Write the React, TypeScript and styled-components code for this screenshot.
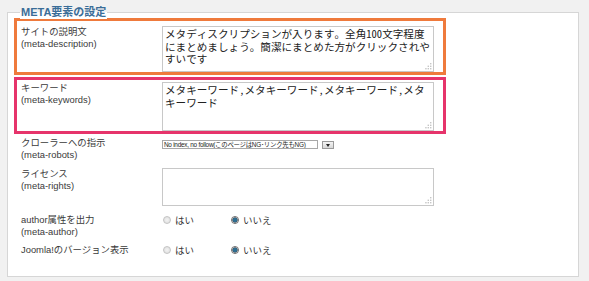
import React from 'react';
import styled, { createGlobalStyle } from 'styled-components';

const GlobalStyle = createGlobalStyle`
  body {
    margin: 0;
    background: #f1f1f1;
    font-family: 'Liberation Sans', 'Noto Sans CJK JP', sans-serif;
  }
`;

type RowData = {
  label: string;
  sub?: string;
  frame?: string;
  pt: number;
  mt?: number;
  field: React.ReactNode;
};

const Grip = () => (
  <GripIcon width="7" height="7" viewBox="0 0 7 7">
    <rect x="5" y="0" width="1.4" height="1.4" fill="#c6c6c6" />
    <rect x="2.6" y="2.6" width="1.4" height="1.4" fill="#c6c6c6" />
    <rect x="5" y="2.6" width="1.4" height="1.4" fill="#c6c6c6" />
    <rect x="0.2" y="5" width="1.4" height="1.4" fill="#c6c6c6" />
    <rect x="2.6" y="5" width="1.4" height="1.4" fill="#c6c6c6" />
    <rect x="5" y="5" width="1.4" height="1.4" fill="#c6c6c6" />
  </GripIcon>
);

const TextBox: React.FC<{ h: number; value?: string }> = ({ h, value }) => (
  <TextWrap>
    <TextArea style={{ height: h }} defaultValue={value} readOnly />
    <Grip />
  </TextWrap>
);

const YesNo = () => (
  <Radios>
    <Option>
      <Radio />
      はい
    </Option>
    <Option>
      <Radio checked />
      いいえ
    </Option>
  </Radios>
);

// built lazily so the styled parts below are defined by then
const getRows = (): RowData[] => [
  {
    label: 'サイトの説明文',
    sub: '(meta-description)',
    frame: '#ef7a3c',
    pt: 5,
    field: (
      <TextBox
        h={46}
        value="メタディスクリプションが入ります。全角100文字程度にまとめましょう。簡潔にまとめた方がクリックされやすいです"
      />
    ),
  },
  {
    label: 'キーワード',
    sub: '(meta-keywords)',
    frame: '#e6346b',
    pt: 2,
    mt: 2,
    field: <TextBox h={49} value="メタキーワード,メタキーワード,メタキーワード,メタキーワード" />,
  },
  {
    label: 'クローラーへの指示',
    sub: '(meta-robots)',
    pt: 0,
    field: (
      <SelectRow>
        <SelectBox>No index, no follow(このページはNG･リンク先もNG)</SelectBox>
        <DropButton />
      </SelectRow>
    ),
  },
  {
    label: 'ライセンス',
    sub: '(meta-rights)',
    pt: 1,
    field: <TextBox h={38} />,
  },
  {
    label: 'author属性を出力',
    sub: '(meta-author)',
    pt: 2,
    field: <YesNo />,
  },
  {
    label: 'Joomla!のバージョン表示',
    pt: 0,
    field: <YesNo />,
  },
];

const App = () => (
  <>
    <GlobalStyle />
    <Page>
      <Panel>
        <Legend>META要素の設定</Legend>
        {getRows().map((r) => (
          <Row key={r.label} frame={r.frame} pt={r.pt} mt={r.mt ?? 0}>
            <Label>
              {r.label}
              {r.sub && <br />}
              {r.sub}
            </Label>
            {r.field}
          </Row>
        ))}
      </Panel>
    </Page>
  </>
);

const Page = styled.div`
  padding: 12px 0 0 7px;
`;

const Panel = styled.div`
  position: relative;
  box-sizing: border-box;
  width: 572px;
  height: 265px;
  padding: 5px 0 0 6px;
  background: #fff;
  border: 1px solid #d6d6d6;
`;

const Legend = styled.div`
  position: absolute;
  top: -7px;
  left: 12px;
  padding: 0 1px;
  background: linear-gradient(#f1f1f1 50%, #fff 50%);
  color: #3a6d98;
  font-size: 11px;
  font-weight: bold;
  line-height: 13px;
`;

const Row = styled.div<{ frame?: string; pt: number; mt: number }>`
  display: flex;
  align-items: flex-start;
  box-sizing: border-box;
  width: 432px;
  margin-top: ${(p) => p.mt}px;
  padding: ${(p) => p.pt}px 0 0 4px;
  border: 3px solid ${(p) => p.frame ?? 'transparent'};
`;

const Label = styled.div`
  flex: 0 0 141px;
  color: #3a3a3a;
  font-size: 9.4px;
  line-height: 12px;
  white-space: nowrap;
`;

const TextWrap = styled.div`
  position: relative;
  width: 272px;
`;

const TextArea = styled.textarea`
  display: block;
  box-sizing: border-box;
  width: 100%;
  margin: 0;
  padding: 1px 2px;
  border: 1px solid #c8c8c8;
  resize: none;
  overflow: hidden;
  outline: none;
  color: #222;
  font-family: 'Noto Sans Mono CJK JP', 'Noto Sans CJK JP', monospace;
  font-size: 10.6px;
  line-height: 12.5px;
`;

const GripIcon = styled.svg`
  position: absolute;
  right: 2px;
  bottom: 2px;
`;

const SelectRow = styled.div`
  display: flex;
  align-items: center;
  gap: 4px;
  margin-top: 3px;
`;

const SelectBox = styled.div`
  box-sizing: border-box;
  width: 156px;
  height: 9px;
  padding: 0 1px;
  border: 1px solid #a8a8a8;
  color: #222;
  font-family: 'Liberation Sans', 'Noto Sans CJK JP', sans-serif;
  font-size: 6.4px;
  line-height: 7px;
  letter-spacing: -0.25px;
  white-space: nowrap;
  overflow: hidden;
`;

const DropButton = styled.div`
  position: relative;
  box-sizing: border-box;
  width: 12px;
  height: 8px;
  border: 1px solid #9a9a9a;
  background: linear-gradient(#f4f4f4, #d8d8d8);
  &::after {
    content: '';
    position: absolute;
    left: 3px;
    top: 2px;
    border-left: 2.5px solid transparent;
    border-right: 2.5px solid transparent;
    border-top: 3px solid #222;
  }
`;

const Radios = styled.div`
  display: flex;
  padding-left: 1px;
`;

const Option = styled.label`
  display: flex;
  align-items: center;
  gap: 4px;
  width: 68px;
  height: 12px;
  color: #333;
  font-family: 'Noto Sans CJK JP', sans-serif;
  font-size: 9.5px;
`;

const Radio = styled.span<{ checked?: boolean }>`
  box-sizing: border-box;
  width: 8px;
  height: 8px;
  border-radius: 50%;
  border: 1px solid ${(p) => (p.checked ? '#6b6b6b' : '#c4c4c4')};
  background: ${(p) =>
    p.checked
      ? 'radial-gradient(circle, #2d6f93 0 1.8px, #3d5566 2.4px, #e6e6e6 2.8px)'
      : 'radial-gradient(circle, #f3f3f3, #dcdcdc)'};
`;

export default App;
